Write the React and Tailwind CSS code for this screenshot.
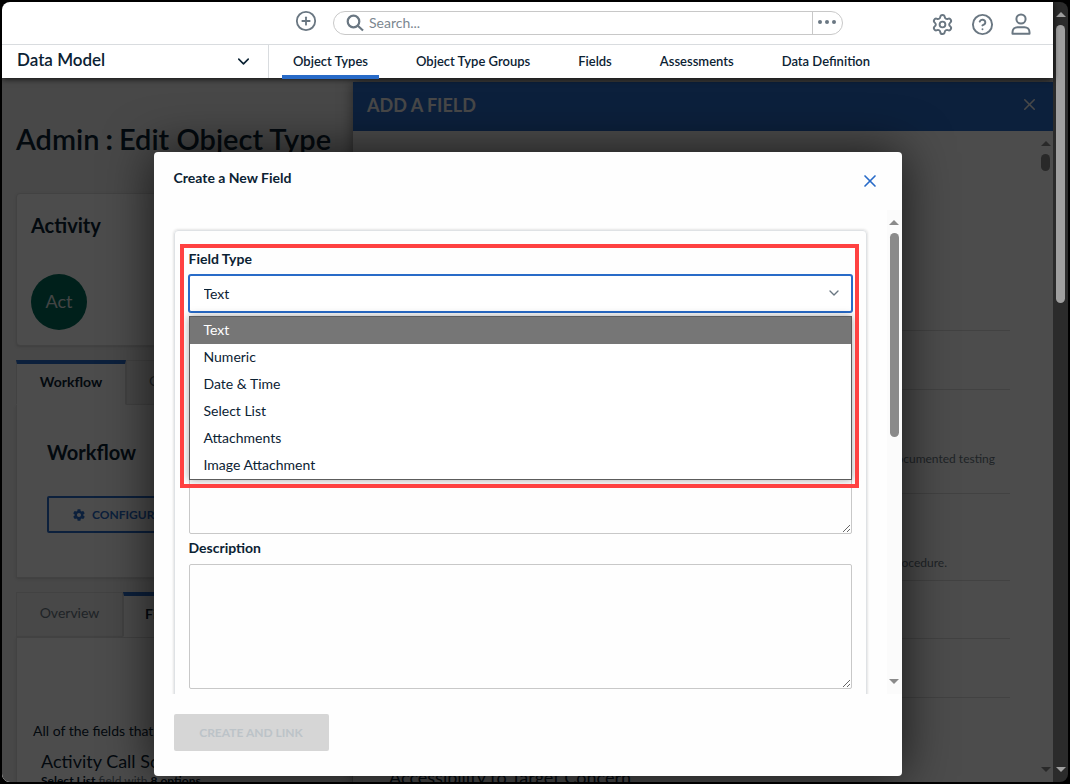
import { useState } from 'react';
import { ChevronDown, CircleHelp, CirclePlus, Settings, X } from 'lucide-react';
import { IoMdSettings } from 'react-icons/io';

const NAV_TABS = ['Object Types', 'Object Type Groups', 'Fields', 'Assessments', 'Data Definition'];

const FIELD_TYPES = ['Text', 'Numeric', 'Date & Time', 'Select List', 'Attachments', 'Image Attachment'];

/** Small triangle used at both ends of a scrollbar */
const ScrollArrow = ({ down, className }) => (
  <svg viewBox="0 0 10 5" className={`h-[5px] w-[10px] shrink-0 ${className}`} aria-hidden="true">
    <path d={down ? 'M0 0h10L5 5z' : 'M0 5h10L5 0z'} fill="currentColor" />
  </svg>
);

const SearchIcon = () => (
  <svg viewBox="0 0 18 18" className="ml-3 size-[18px] shrink-0" fill="none" stroke="currentColor" strokeWidth="2.2" aria-hidden="true">
    <circle cx="7.500" cy="7.500" r="5.800" />
    <path d="M11.800 11.800 17 16.500" />
  </svg>
);

const UserIcon = () => (
  <svg viewBox="0 0 20 22" className="h-[22px] w-5" fill="none" stroke="currentColor" strokeWidth="2" aria-hidden="true">
    <circle cx="10" cy="6" r="4.6" />
    <path d="M1.5 20.8v-1.6c0-3 2.200-5 5-5h7c2.800 0 5 2 5 5v1.600z" strokeLinejoin="round" />
  </svg>
);

/** Global bar: create, search, settings, help and account */
const TopBar = () => (
  <div className="flex h-[43px] items-center border-b border-[#d9dcdf] pr-[22px] text-[#6a7782]">
    <div className="w-[293px] shrink-0" />
    <button type="button" aria-label="Create" className="mb-1 shrink-0">
      <CirclePlus size={22} strokeWidth={2} />
    </button>
    <div className="ml-4 flex h-6 w-[510px] items-center rounded-full border border-[#c8c8c8]">
      <SearchIcon />
      <input
        type="text"
        aria-label="Search"
        placeholder="Search..."
        className="h-[22px] min-w-0 flex-1 bg-transparent px-[5px] pb-0.5 text-sm outline-none placeholder:text-[#7c8790]"
      />
      <button
        type="button"
        aria-label="Search options"
        className="flex h-full w-[30px] items-center border-l border-[#c8c8c8] pb-0.5 pl-[5px]"
      >
        <svg viewBox="0 0 18 4" className="h-1 w-[18px]" fill="currentColor" aria-hidden="true">
          <circle cx="2" cy="2" r="2" />
          <circle cx="9" cy="2" r="2" />
          <circle cx="16" cy="2" r="2" />
        </svg>
      </button>
    </div>
    <div className="ml-auto flex items-center gap-[17px] pt-0.5">
      <button type="button" aria-label="Settings"><Settings size={23} strokeWidth={2} /></button>
      <button type="button" aria-label="Help"><CircleHelp size={23} strokeWidth={2} /></button>
      <button type="button" aria-label="Account"><UserIcon /></button>
    </div>
  </div>
);

const NavBar = () => (
  <nav className="flex h-[33px] text-[#0b2233]">
    <button
      type="button"
      className="flex w-[267px] shrink-0 items-center justify-between border-r border-[#d9dcdf] pr-[15px] pb-1 pl-[15px] text-[17px] font-semibold"
    >
      Data Model
      <ChevronDown size={19} strokeWidth={2} className="mt-1" />
    </button>
    <div className="ml-[13px] flex gap-[26px] text-[13px] font-semibold">
      {NAV_TABS.map((tab, i) => (
        <a
          key={tab}
          href="#"
          className={`h-[34px] px-[11px] pt-1.5 leading-5 whitespace-nowrap ${
            i === 0 ? 'border-b-4 border-[#286bc8]' : ''
          }`}
        >
          {tab}
        </a>
      ))}
    </div>
  </nav>
);

const tabBase = 'h-[45px] shrink-0 border border-[#dcdcdc] pb-1 text-sm';
const tabActive = 'border-t-4 border-t-[#286bc8] border-b-white bg-white font-bold';
const panel = 'border border-[#dcdcdc] bg-white shadow-sm';

/** Page underneath the dialog */
const ObjectTypePage = () => (
  <main className="w-[351px] shrink-0 overflow-hidden bg-[#f0f0f0] pl-3.5 whitespace-nowrap text-[#0b2233]">
    <h1 className="mt-[43px] flex text-[29px] leading-9 font-semibold">
      Admin<span className="px-1.5 font-bold">:</span>Edit Object Type
    </h1>

    <section className={`mt-9 h-[153px] rounded-sm pt-[19px] pl-3.5 ${panel}`}>
      <h2 className="text-xl leading-6 font-bold">Activity</h2>
      <div className="mt-[37px] flex size-14 items-center justify-center rounded-full bg-[#006b5a] pb-0.5 text-lg text-[#dfe5e5]">
        Act
      </div>
    </section>

    <div className="mt-3.5 flex">
      <button type="button" className={`w-[110px] ${tabBase} ${tabActive}`}>Workflow</button>
      <button type="button" className={`w-[120px] pl-[22px] text-left text-[#6a7782] ${tabBase}`}>Content</button>
    </div>
    <section className={`h-[173px] border-t-0 pt-[35px] pl-[30px] ${panel}`}>
      <h2 className="text-xl leading-6 font-bold">Workflow</h2>
      <button
        type="button"
        className="mt-8 flex h-[37px] items-center gap-1.5 rounded-xs border-2 border-[#286bc8] px-[23px] text-xs font-bold text-[#286bc8]"
      >
        <IoMdSettings size={14} />
        CONFIGURE
      </button>
    </section>

    <div className="mt-3.5 flex">
      <button type="button" className={`w-[107px] text-[#6a7782] ${tabBase}`}>Overview</button>
      <button type="button" className={`w-[110px] pl-[21px] text-left ${tabBase} ${tabActive}`}>Fields</button>
    </div>
    <section className={`h-[300px] pt-[81px] pl-4 ${panel}`}>
      <p className="text-sm leading-6">All of the fields that are</p>
      <h3 className="mt-1 pl-2 text-lg leading-7">Activity Call Source</h3>
      <p className="pl-2 text-xs leading-3 text-[#6a7782]">
        <b className="text-[#0b2233]">Select List</b> field with <b className="text-[#0b2233]">8 options</b>
      </p>
    </section>
  </main>
);

const AddFieldDrawer = () => (
  <aside className="mt-1 flex min-w-0 flex-1 flex-col bg-white shadow-[0_0_12px_rgba(0,0,0,0.5)]">
    <header className="flex h-[49px] shrink-0 items-center justify-between bg-[#286bc8] pr-3.5 pb-1 pl-3.5 text-[#f0f0f0]">
      <h2 className="text-lg leading-5 font-bold">ADD A FIELD</h2>
      <button type="button" aria-label="Close panel"><X size={19} strokeWidth={2} /></button>
    </header>
    <div className="flex min-h-0 flex-1">
      <ul className="mr-7 ml-9 flex-1 overflow-hidden text-right text-xs text-[#6a7782]">
        <li className="h-[200px] border-b border-[#dcdcdc]" />
        <li className="h-[59px] border-b border-[#dcdcdc]" />
        <li className="h-[104px] border-b border-[#dcdcdc] pt-[61px] pr-[15px]">documented testing</li>
        <li className="h-[87px] border-b border-[#dcdcdc] pt-[61px] pr-[63px]">procedure.</li>
        <li className="h-[58px] border-b border-[#dcdcdc]" />
        <li className="h-[59px] border-b border-[#dcdcdc]" />
        <li className="pt-[63px] text-left text-lg leading-8 text-[#0b2233]">Accessibility to Target Concern</li>
      </ul>
      <div className="flex w-[15px] flex-col items-center py-[10px] text-[#8a8a8a]">
        <ScrollArrow />
        <div className="mt-2 h-[17px] w-[9px] rounded-full bg-[#8a8a8a]" />
        <ScrollArrow down className="mt-auto" />
      </div>
    </div>
  </aside>
);

const labelClass = 'block h-5 text-sm leading-5 font-bold';
const textareaClass = 'block h-[125px] w-full resize rounded-xs border border-[#c8c8c8] bg-transparent';

/** Field type select with its option list open */
const FieldTypeSelect = () => {
  const [type, setType] = useState('Text');

  return (
    <div className="relative">
      <label htmlFor="field-type" className={labelClass}>Field Type</label>
      <div className="relative mt-1.5">
        <select
          id="field-type"
          value={type}
          onChange={(e) => setType(e.target.value)}
          className="block h-[37px] w-full appearance-none rounded-xs border border-[#286bc8] bg-white px-3.5 text-sm ring-1 ring-[#286bc8] outline-none"
        >
          {FIELD_TYPES.map((t) => <option key={t}>{t}</option>)}
        </select>
        <ChevronDown size={16} strokeWidth={2} className="absolute top-[10px] right-[10px] text-[#6a7782]" />
        <ul
          role="listbox"
          aria-label="Field types"
          className="absolute inset-x-0 top-[41px] z-10 border border-[#5c5c5c] bg-white text-sm shadow-[0_0_8px_rgba(0,0,0,0.35)]"
        >
          {FIELD_TYPES.map((t) => (
            <li
              key={t}
              role="option"
              aria-selected={t === type}
              onClick={() => setType(t)}
              className={`h-[27px] px-3.5 leading-[26px] ${t === type ? 'bg-[#767676] text-white' : ''}`}
            >
              {t}
            </li>
          ))}
        </ul>
      </div>
      {/* Highlight frame around the select and its list */}
      <div className="pointer-events-none absolute -top-[5px] -right-[7px] -left-[9px] z-20 h-[244px] border-4 border-[#ff4141]" />
    </div>
  );
};

const CreateFieldDialog = () => (
  <div
    role="dialog"
    aria-label="Create a New Field"
    className="flex w-[748px] flex-col rounded-sm bg-[#fefefe] text-[#0b2233] shadow-[0_0_50px_rgba(0,0,0,0.7)]"
  >
    <header className="flex h-[58px] shrink-0 items-center justify-between pr-[22px] pl-5">
      <h2 className="pb-1.5 text-sm font-bold">Create a New Field</h2>
      <button type="button" aria-label="Close" className="text-[#286bc8]"><X size={20} strokeWidth={2} /></button>
    </header>

    <div className="flex min-h-0 flex-1 overflow-hidden">
      <div className="flex-1 pt-5 pr-5 pl-5">
        <div className="h-[600px] rounded-sm border border-[#dfe2e5] px-3.5 pt-[18px] shadow-[0_0_3px_rgba(0,0,0,0.2)]">
          <FieldTypeSelect />
          <textarea aria-label="Tooltip" className={`mt-[97px] ${textareaClass}`} />
          <label htmlFor="description" className={`mt-1 mb-1.5 ${labelClass}`}>Description</label>
          <textarea id="description" className={textareaClass} />
        </div>
      </div>
      <div className="flex w-[15px] flex-col items-center bg-[#fbfbfb] py-[10px] text-[#8a8a8a]">
        <ScrollArrow />
        <div className="mt-2 h-[204px] w-[9px] rounded-full bg-[#8a8a8a]" />
        <ScrollArrow down className="mt-auto" />
      </div>
    </div>

    <footer className="shrink-0 px-5 pt-5 pb-[25px]">
      <button type="button" disabled className="h-[37px] w-[155px] rounded-xs bg-[#d6d6d6] text-xs font-bold text-[#bcc3c8]">
        CREATE AND LINK
      </button>
    </footer>
  </div>
);

const App = () => (
  <div className="h-screen bg-black p-0.5 font-['Lato',sans-serif]">
    <div className="flex h-full overflow-hidden rounded-lg">
      <div className="flex min-w-0 flex-1 flex-col">
        <header className="relative z-10 shrink-0 bg-white shadow-[0_1px_6px_rgba(0,0,0,0.8)]">
          <TopBar />
          <NavBar />
        </header>
        <div className="relative flex min-h-0 flex-1 overflow-hidden bg-[#f0f0f0]">
          <ObjectTypePage />
          <AddFieldDrawer />
          <div className="absolute inset-0 flex justify-center bg-black/70 pt-[74px] pb-1.5">
            <CreateFieldDialog />
          </div>
        </div>
      </div>

      {/* Page scrollbar */}
      <div className="flex w-[15px] shrink-0 flex-col items-center bg-[#2b2b2b] py-[10px] text-[#9f9f9f]">
        <ScrollArrow />
        <div className="mt-2 h-[278px] w-[9px] rounded-full bg-[#9f9f9f]" />
        <ScrollArrow down className="mt-auto" />
      </div>
    </div>
  </div>
);

export default App;
